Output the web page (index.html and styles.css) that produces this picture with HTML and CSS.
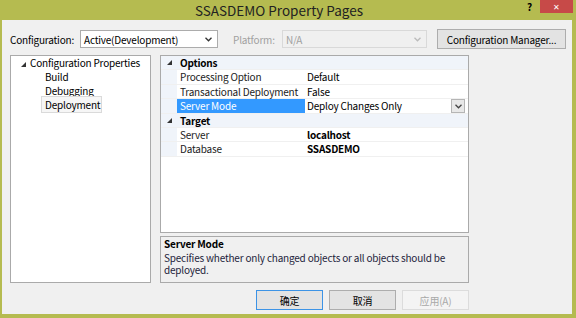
FILE: index.html
```html
<!DOCTYPE html>
<html lang="en">
    <head>
        <meta charset="UTF-8">
        <title>SSASDEMO Property Pages</title>
        <link rel="stylesheet" href="styles.css">
    </head>
    <body>
        <div class="window">
            <div class="titlebar">
                <span class="title">SSASDEMO Property Pages</span>
                <span class="help">?</span>
                <span class="close">&#x2715;</span>
            </div>
            <div class="client">
                <div class="toolbar">
                    <span class="label">Configuration:</span>
                    <div class="combo cfg">
                        <span>Active(Development)</span>
                        <svg class="chev" width="7" height="5" viewBox="0 0 7 5"><path d="M0.5 0.8 L3.5 3.8 L6.5 0.8" fill="none" stroke="#333" stroke-width="1.3"/></svg>
                    </div>
                    <span class="label off">Platform:</span>
                    <div class="combo plat off">
                        <span>N/A</span>
                        <svg class="chev" width="7" height="5" viewBox="0 0 7 5"><path d="M0.5 0.8 L3.5 3.8 L6.5 0.8" fill="none" stroke="#bbb" stroke-width="1.3"/></svg>
                    </div>
                    <div class="btn mgr">Configuration Manager...</div>
                </div>

                <div class="main">
                    <div class="tree">
                        <div class="node"><span class="tri"></span>Configuration Properties</div>
                        <div class="leaf">Build</div>
                        <div class="leaf">Debugging</div>
                        <div class="leaf"><span class="sel">Deployment</span></div>
                    </div>

                    <div class="right">
                        <div class="grid">
                            <div class="row cat"><span class="gut"><span class="tri"></span></span><span class="name">Options</span></div>
                            <div class="row"><span class="gut"></span><span class="name">Processing Option</span><span class="val">Default</span></div>
                            <div class="row"><span class="gut"></span><span class="name">Transactional Deployment</span><span class="val">False</span></div>
                            <div class="row active"><span class="gut"></span><span class="name">Server Mode</span><span class="val">Deploy Changes Only</span>
                                <span class="drop"><svg width="7" height="5" viewBox="0 0 7 5"><path d="M0.5 0.8 L3.5 3.8 L6.5 0.8" fill="none" stroke="#444" stroke-width="1.3"/></svg></span>
                            </div>
                            <div class="row cat"><span class="gut"><span class="tri"></span></span><span class="name">Target</span></div>
                            <div class="row"><span class="gut"></span><span class="name">Server</span><span class="val b">localhost</span></div>
                            <div class="row"><span class="gut"></span><span class="name">Database</span><span class="val b">SSASDEMO</span></div>
                        </div>
                        <div class="desc">
                            <h4>Server Mode</h4>
                            <p>Specifies whether only changed objects or all objects should be deployed.</p>
                        </div>
                    </div>
                </div>

                <div class="buttons">
                    <div class="btn ok">确定</div>
                    <div class="btn">取消</div>
                    <div class="btn off">应用(A)</div>
                </div>
            </div>
        </div>
    </body>
</html>
```

FILE: styles.css
```css
body {
    margin: 0;
    background: #b5bb50;
    font-family: "Noto Sans CJK SC", sans-serif;
    font-size: 10px;
    letter-spacing: -0.2px;
    color: #000;
}

.window {
    width: 576px;
    height: 318px;
    display: flex;
    flex-direction: column;
}

.titlebar {
    height: 20px;
    display: flex;
    align-items: center;
    position: relative;
}

.title {
    flex: 1;
    text-align: center;
    font-size: 13.5px;
    letter-spacing: 0;
    line-height: 20px;
    color: #222;
    padding-right: 18px;
}

.help {
    position: absolute;
    right: 44px;
    top: 1px;
    font-size: 10px;
    font-weight: bold;
    line-height: 11px;
}

.close {
    position: absolute;
    right: 3px;
    top: 0;
    width: 33px;
    height: 13px;
    background: #c74a48;
    color: #fff;
    font-size: 8px;
    text-align: center;
    line-height: 13px;
}

.client {
    flex: 1;
    margin: 0 4px 4px 2px;
    background: #f0f0f0;
    padding: 9px 6px 0 8px;
}

/* 顶部配置栏 */
.toolbar {
    display: flex;
    align-items: center;
    height: 20px;
    white-space: nowrap;
}

.label {
    width: 70px;
}

.label.off {
    width: 49px;
    color: #a0a0a0;
    margin-left: 15px;
}

.combo {
    height: 18px;
    border: 1px solid #acacac;
    background: #fff;
    display: flex;
    align-items: center;
    justify-content: space-between;
    padding: 0 5px 0 3px;
    box-sizing: border-box;
}

.combo.cfg {
    width: 138px;
}

.combo.plat {
    width: 145px;
    background: #f0f0f0;
    border-color: #d9d9d9;
    color: #a0a0a0;
}

.btn {
    height: 20px;
    border: 1px solid #adadad;
    background: #e3e3e3;
    box-sizing: border-box;
    display: flex;
    align-items: center;
    justify-content: center;
    white-space: nowrap;
}

.btn.mgr {
    margin-left: 10px;
    width: 129px;
}

/* 主体 */
.main {
    display: flex;
    gap: 9px;
    margin-top: 6px;
    width: 459px;
    height: 228px;
}

.tree {
    width: 141px;
    border: 1px solid #aaaaaa;
    background: #fff;
    box-sizing: border-box;
    white-space: nowrap;
}

.tri {
    display: inline-block;
    width: 0;
    height: 0;
    border-left: 5px solid transparent;
    border-bottom: 5px solid #333;
}

.node {
    height: 14px;
    line-height: 14px;
    padding-left: 10px;
}

.node .tri {
    margin-right: 4px;
}

.leaf {
    height: 14px;
    line-height: 14px;
    padding-left: 34px;
}

.sel {
    border: 1px solid #dadada;
    background: #f6f6f6;
    padding: 0 1px 0 3px;
    margin-left: -4px;
}

.right {
    width: 309px;
    display: flex;
    flex-direction: column;
    gap: 3px;
}

/* 属性表 */
.grid {
    height: 178px;
    border: 1px solid #aaaaaa;
    background: #fff;
    box-sizing: border-box;
}

.row {
    display: flex;
    height: 14.4px;
    line-height: 14px;
    border-bottom: 1px solid #f0f0f0;
    box-sizing: border-box;
    position: relative;
    white-space: nowrap;
}

.gut {
    width: 16px;
    background: #f0f4fa;
    display: flex;
    align-items: center;
    justify-content: center;
}

.row .name {
    width: 128px;
    padding-left: 3px;
    box-sizing: border-box;
    color: #222;
}

.row .val {
    padding-left: 2px;
}

.row .b {
    font-weight: bold;
}

.row.cat {
    background: #f0f4fa;
}

.row.cat .name {
    font-weight: bold;
    color: #000;
}

.row.active .name {
    background: #3399ff;
    color: #fff;
}

.drop {
    position: absolute;
    right: 3px;
    top: 0;
    width: 14px;
    height: 14px;
    border: 1px solid #b5b5b5;
    background: #e8e8e8;
    box-sizing: border-box;
    display: flex;
    align-items: center;
    justify-content: center;
}

.desc {
    flex: 1;
    border: 1px solid #aaaaaa;
    box-sizing: border-box;
    padding: 1px 3px;
}

.desc h4 {
    margin: 0;
    font-size: 10px;
    line-height: 12px;
}

.desc p {
    margin: 2px 0 0;
    line-height: 12px;
    color: #1e1e3c;
}

/* 底部按钮 */
.buttons {
    width: 459px;
    display: flex;
    justify-content: flex-end;
    gap: 6px;
    margin-top: 7px;
}

.buttons .btn {
    width: 67px;
    font-size: 10px;
}

.buttons .btn.ok {
    border-color: #3c93e6;
}

.buttons .btn.off {
    background: #f4f4f4;
    border-color: #dcdcdc;
    color: #a8a8a8;
}
```
